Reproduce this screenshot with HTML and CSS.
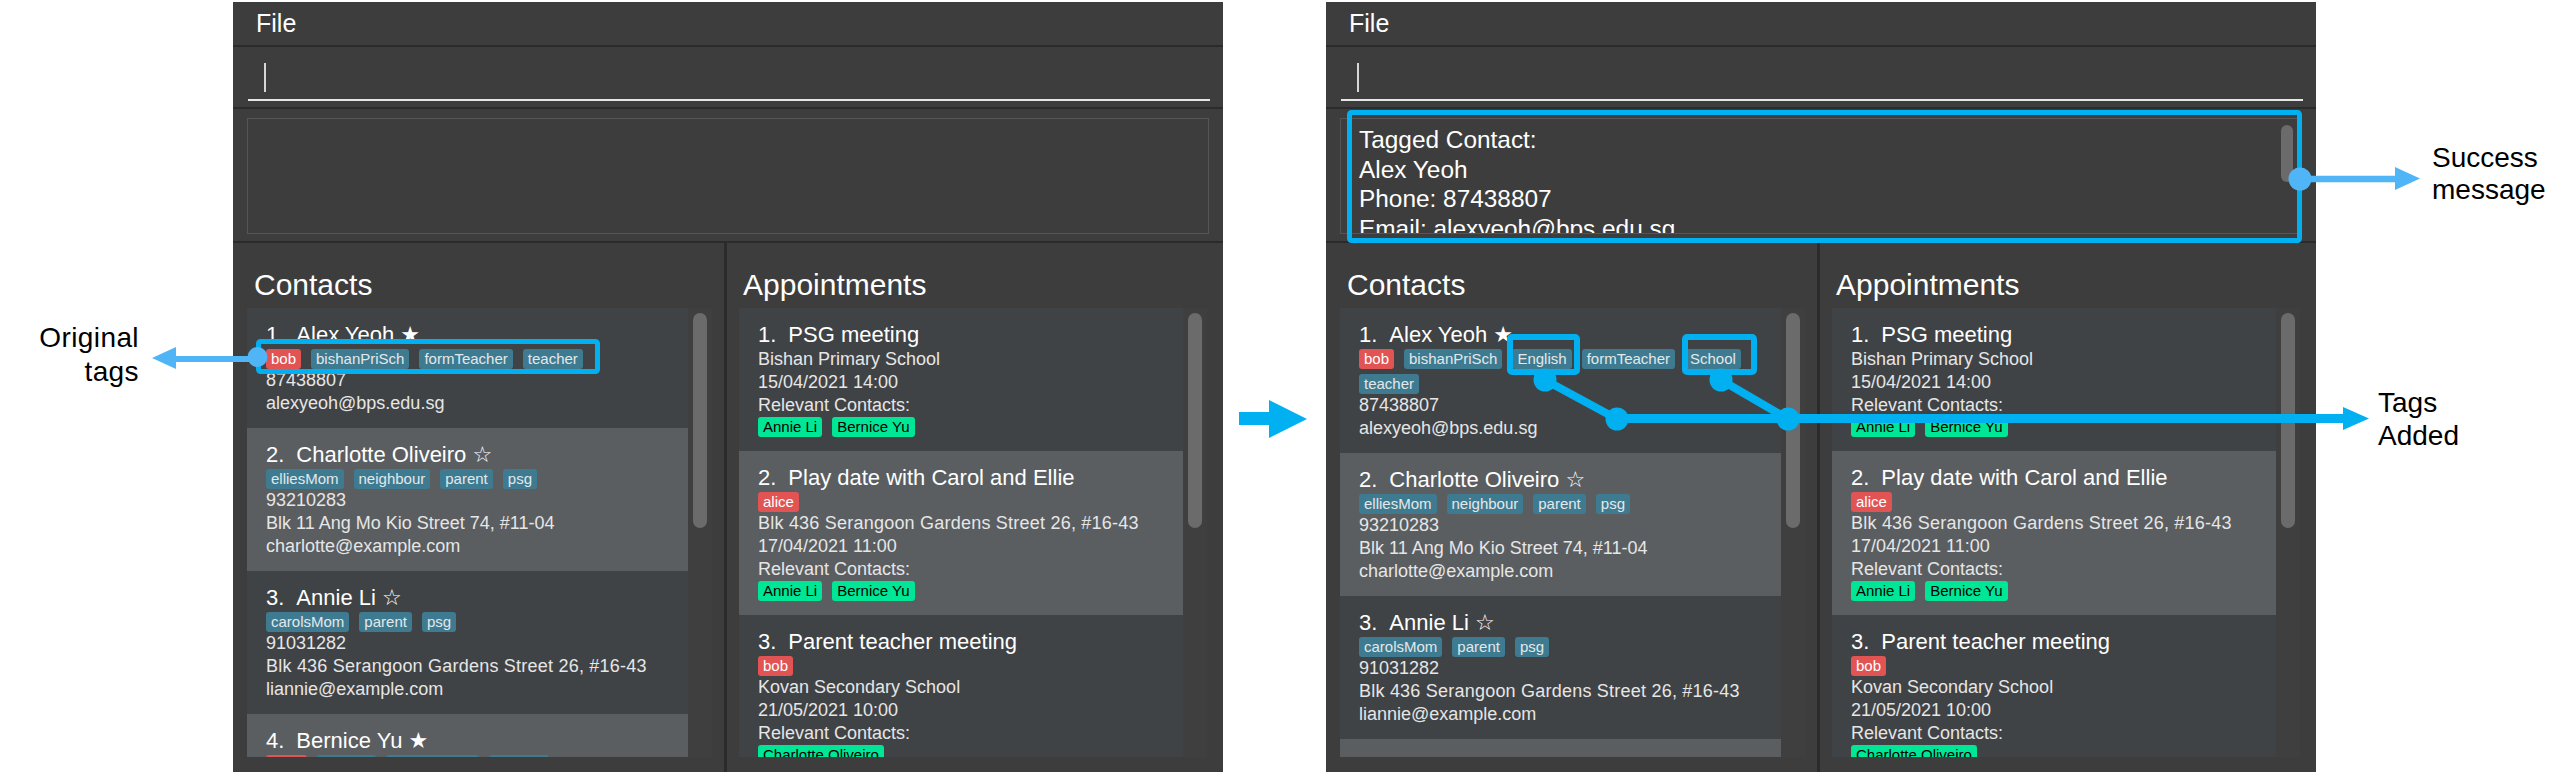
FILE: index.html
```html
<!DOCTYPE html>
<html>
<head>
<meta charset="utf-8">
<link rel="stylesheet" href="styles.css">
</head>
<body>
<div class="stage">
  <div class="window">
    <div class="menubar">File</div>
    <div class="command"><div class="input"><div class="caret"></div></div></div>
    <div class="result"><div class="rbox"><div class="rtext"></div></div></div>
    <div class="lists">
      <div class="panel panel-contacts">
        <div class="heading">Contacts</div>
        <div class="list">
          <div class="cards">
            <div class="card">
              <div class="title"><span class="idx">1.</span>Alex Yeoh <span class="star">★</span></div>
              <div class="tags"><span class="tag tag-red">bob</span><span class="tag">bishanPriSch</span><span class="tag">formTeacher</span><span class="tag">teacher</span></div>
              <div class="line">87438807</div>
              <div class="line">alexyeoh@bps.edu.sg</div>
            </div>
            <div class="card">
              <div class="title"><span class="idx">2.</span>Charlotte Oliveiro <span class="star">☆</span></div>
              <div class="tags"><span class="tag">elliesMom</span><span class="tag">neighbour</span><span class="tag">parent</span><span class="tag">psg</span></div>
              <div class="line">93210283</div>
              <div class="line">Blk 11 Ang Mo Kio Street 74, #11-04</div>
              <div class="line">charlotte@example.com</div>
            </div>
            <div class="card">
              <div class="title"><span class="idx">3.</span>Annie Li <span class="star">☆</span></div>
              <div class="tags"><span class="tag">carolsMom</span><span class="tag">parent</span><span class="tag">psg</span></div>
              <div class="line">91031282</div>
              <div class="line line-wide">Blk 436 Serangoon Gardens Street 26, #16-43</div>
              <div class="line">liannie@example.com</div>
            </div>
            <div class="card">
              <div class="title"><span class="idx">4.</span>Bernice Yu <span class="star">★</span></div>
              <div class="tags"><span class="tag tag-red">alice</span><span class="tag">English</span><span class="tag">formTeacher</span><span class="tag">teacher</span></div>
              <div class="line">92492021</div>
            </div>
          </div>
          <div class="track"><div class="thumb"></div></div>
        </div>
      </div>
      <div class="panel panel-appts">
        <div class="heading">Appointments</div>
        <div class="list">
          <div class="cards appts">
            <div class="card">
              <div class="title"><span class="idx">1.</span>PSG meeting</div>
              <div class="line">Bishan Primary School</div>
              <div class="line">15/04/2021 14:00</div>
              <div class="line">Relevant Contacts:</div>
              <div class="tags tags-flush"><span class="tag tag-green">Annie Li</span><span class="tag tag-green">Bernice Yu</span></div>
            </div>
            <div class="card">
              <div class="title"><span class="idx">2.</span>Play date with Carol and Ellie</div>
              <div class="tags"><span class="tag tag-red">alice</span></div>
              <div class="line line-wide">Blk 436 Serangoon Gardens Street 26, #16-43</div>
              <div class="line">17/04/2021 11:00</div>
              <div class="line">Relevant Contacts:</div>
              <div class="tags tags-flush"><span class="tag tag-green">Annie Li</span><span class="tag tag-green">Bernice Yu</span></div>
            </div>
            <div class="card">
              <div class="title"><span class="idx">3.</span>Parent teacher meeting</div>
              <div class="tags"><span class="tag tag-red">bob</span></div>
              <div class="line">Kovan Secondary School</div>
              <div class="line">21/05/2021 10:00</div>
              <div class="line">Relevant Contacts:</div>
              <div class="tags tags-flush"><span class="tag tag-green">Charlotte Oliveiro</span></div>
            </div>
          </div>
          <div class="track"><div class="thumb"></div></div>
        </div>
      </div>
    </div>
  </div>

  <div class="window">
    <div class="menubar">File</div>
    <div class="command"><div class="input"><div class="caret"></div></div></div>
    <div class="result"><div class="rbox">
      <div class="rtext">Tagged Contact:<br>Alex Yeoh<br>Phone: 87438807<br>Email: alexyeoh@bps.edu.sg<br>Address: 123, Jurong West Ave 6, #08-111</div>
      <div class="rthumb"></div>
    </div></div>
    <div class="lists">
      <div class="panel panel-contacts">
        <div class="heading">Contacts</div>
        <div class="list">
          <div class="cards">
            <div class="card">
              <div class="title"><span class="idx">1.</span>Alex Yeoh <span class="star">★</span></div>
              <div class="tags"><span class="tag tag-red">bob</span><span class="tag">bishanPriSch</span><span class="tag">English</span><span class="tag">formTeacher</span><span class="tag">School</span><span class="tag">teacher</span></div>
              <div class="line">87438807</div>
              <div class="line">alexyeoh@bps.edu.sg</div>
            </div>
            <div class="card">
              <div class="title"><span class="idx">2.</span>Charlotte Oliveiro <span class="star">☆</span></div>
              <div class="tags"><span class="tag">elliesMom</span><span class="tag">neighbour</span><span class="tag">parent</span><span class="tag">psg</span></div>
              <div class="line">93210283</div>
              <div class="line">Blk 11 Ang Mo Kio Street 74, #11-04</div>
              <div class="line">charlotte@example.com</div>
            </div>
            <div class="card">
              <div class="title"><span class="idx">3.</span>Annie Li <span class="star">☆</span></div>
              <div class="tags"><span class="tag">carolsMom</span><span class="tag">parent</span><span class="tag">psg</span></div>
              <div class="line">91031282</div>
              <div class="line line-wide">Blk 436 Serangoon Gardens Street 26, #16-43</div>
              <div class="line">liannie@example.com</div>
            </div>
            <div class="card">
              <div class="title"><span class="idx">4.</span>Bernice Yu <span class="star">★</span></div>
              <div class="line">92492021</div>
            </div>
          </div>
          <div class="track"><div class="thumb"></div></div>
        </div>
      </div>
      <div class="panel panel-appts">
        <div class="heading">Appointments</div>
        <div class="list">
          <div class="cards appts">
            <div class="card">
              <div class="title"><span class="idx">1.</span>PSG meeting</div>
              <div class="line">Bishan Primary School</div>
              <div class="line">15/04/2021 14:00</div>
              <div class="line">Relevant Contacts:</div>
              <div class="tags tags-flush"><span class="tag tag-green">Annie Li</span><span class="tag tag-green">Bernice Yu</span></div>
            </div>
            <div class="card">
              <div class="title"><span class="idx">2.</span>Play date with Carol and Ellie</div>
              <div class="tags"><span class="tag tag-red">alice</span></div>
              <div class="line line-wide">Blk 436 Serangoon Gardens Street 26, #16-43</div>
              <div class="line">17/04/2021 11:00</div>
              <div class="line">Relevant Contacts:</div>
              <div class="tags tags-flush"><span class="tag tag-green">Annie Li</span><span class="tag tag-green">Bernice Yu</span></div>
            </div>
            <div class="card">
              <div class="title"><span class="idx">3.</span>Parent teacher meeting</div>
              <div class="tags"><span class="tag tag-red">bob</span></div>
              <div class="line">Kovan Secondary School</div>
              <div class="line">21/05/2021 10:00</div>
              <div class="line">Relevant Contacts:</div>
              <div class="tags tags-flush"><span class="tag tag-green">Charlotte Oliveiro</span></div>
            </div>
          </div>
          <div class="track"><div class="thumb"></div></div>
        </div>
      </div>
    </div>
  </div>

  <svg class="overlay" width="2570" height="773" viewBox="0 0 2570 773">
    <rect x="258.5" y="341.5" width="339" height="30" rx="2" fill="none" stroke="#00b0f0" stroke-width="5"/>
    <line x1="170" y1="359" x2="257" y2="359" stroke="#4fb5f7" stroke-width="6"/>
    <polygon points="152,358 176,347 176,369" fill="#4fb5f7"/>
    <circle cx="257.5" cy="357" r="10" fill="#4fb5f7"/>
    <polygon points="1239,412 1269,412 1269,400 1307,419 1269,438 1269,425 1239,425" fill="#00b0f0"/>
    <rect x="1349.5" y="112.5" width="950" height="128" rx="2" fill="none" stroke="#00b0f0" stroke-width="5"/>
    <line x1="2300" y1="179" x2="2398" y2="179" stroke="#4fb5f7" stroke-width="6.5"/>
    <polygon points="2395,167 2420,178.5 2395,190" fill="#4fb5f7"/>
    <circle cx="2300" cy="179" r="11.5" fill="#4fb5f7"/>
    <rect x="1510" y="337" width="67" height="35" rx="2" fill="none" stroke="#00b0f0" stroke-width="6"/>
    <rect x="1685" y="337" width="69" height="35" rx="2" fill="none" stroke="#00b0f0" stroke-width="6"/>
    <line x1="1545" y1="380" x2="1617" y2="419" stroke="#00b0f0" stroke-width="8"/>
    <line x1="1721" y1="380" x2="1788" y2="419" stroke="#00b0f0" stroke-width="8"/>
    <line x1="1617" y1="418.5" x2="2346" y2="418.5" stroke="#00b0f0" stroke-width="9"/>
    <polygon points="2343,407 2369,418.5 2343,430" fill="#00b0f0"/>
    <circle cx="1545" cy="380" r="11.5" fill="#00b0f0"/>
    <circle cx="1617" cy="419" r="11.5" fill="#00b0f0"/>
    <circle cx="1721" cy="380" r="11.5" fill="#00b0f0"/>
    <circle cx="1788" cy="419" r="11.5" fill="#00b0f0"/>
  </svg>

  <div class="note note-original">Original<br>tags</div>
  <div class="note note-success">Success<br>message</div>
  <div class="note note-added">Tags<br>Added</div>
</div>
</body>
</html>
```

FILE: styles.css
```css
* { box-sizing: border-box; }

body {
  margin: 0;
  background: #ffffff;
  font-family: "Liberation Sans", Arial, sans-serif;
}

.stage {
  position: relative;
  width: 2570px;
  height: 773px;
  display: flex;
  gap: 103px;
  padding: 2px 0 0 233px;
  overflow: hidden;
}

.window {
  flex: none;
  width: 990px;
  height: 770px;
  background: #3d3d3d;
  color: #ffffff;
  display: flex;
  flex-direction: column;
  overflow: hidden;
}

.menubar {
  height: 45px;
  border-bottom: 2px solid #2b2b2b;
  display: flex;
  align-items: center;
  padding-left: 23px;
  font-size: 25px;
}

.command {
  height: 62px;
  border-bottom: 2px solid #2b2b2b;
  padding: 12px 13px 0 15px;
}

.input {
  height: 42px;
  border-bottom: 2px solid #e6e6e6;
  padding: 4px 0 0 16px;
}

.caret {
  width: 2px;
  height: 29px;
  background: #d6d6d6;
}

.result {
  height: 134px;
  border-bottom: 2px solid #2b2b2b;
  padding: 9px 14px 0;
}

.rbox {
  height: 116px;
  border: 1px solid #555555;
  display: flex;
  overflow: hidden;
  padding: 6px 0 0 18px;
}

.rtext {
  flex: 1;
  font-size: 24.4px;
  line-height: 29.5px;
  white-space: nowrap;
}

.rthumb {
  flex: none;
  width: 12px;
  height: 57px;
  margin-right: 8px;
  border-radius: 6px;
  background: #6b6b6b;
}

.lists {
  flex: 1;
  display: flex;
  min-height: 0;
}

.panel {
  display: flex;
  flex-direction: column;
  padding-top: 24px;
  padding-bottom: 15px;
  min-height: 0;
}

.panel-contacts {
  flex: none;
  width: 494px;
  border-right: 3px solid #2b2b2b;
  padding-left: 14px;
  padding-right: 12px;
}

.panel-appts {
  flex: 1;
  padding-left: 12px;
  padding-right: 16px;
}

.heading {
  font-size: 30px;
  line-height: 36px;
  padding-left: 7px;
  margin-bottom: 5px;
}

.panel-appts .heading {
  padding-left: 4px;
}

.list {
  flex: 1;
  display: flex;
  min-height: 0;
  overflow: hidden;
}

.cards {
  flex: 1;
  overflow: hidden;
}

.track {
  flex: none;
  width: 24px;
  background: #3f3f3f;
  padding: 5px;
}

.thumb {
  height: 215px;
  border-radius: 7px;
  background: #6b6b6b;
}

.card {
  background: #404345;
  padding: 14px 19px 13px;
}

.card:nth-child(even) {
  background: #5a5e61;
}

.appts .card {
  padding-bottom: 14px;
}

.title {
  font-size: 22px;
  line-height: 26px;
  white-space: nowrap;
  color: #ffffff;
}

.idx {
  margin-right: 12px;
}

.star {
  font-family: "DejaVu Sans", sans-serif;
}

.tags {
  display: flex;
  flex-wrap: wrap;
  gap: 5px 10px;
  margin-top: 1px;
}

.tags-flush {
  margin-top: 0;
}

.tag {
  height: 20px;
  line-height: 20px;
  padding: 0 5px;
  font-size: 15px;
  border-radius: 3px;
  background: #3e7b91;
  color: #e4e8ea;
  white-space: nowrap;
}

.tag-red {
  background: #e25353;
  color: #ffffff;
}

.tag-green {
  background: #00e697;
  color: #000000;
}

.line {
  font-size: 18px;
  line-height: 23px;
  color: #e6e6e6;
  white-space: nowrap;
}

.line-wide {
  letter-spacing: 0.22px;
}

.overlay {
  position: absolute;
  left: 0;
  top: 0;
  pointer-events: none;
}

.note {
  position: absolute;
  font-family: "Liberation Sans", Arial, sans-serif;
  font-size: 28px;
  color: #000000;
  white-space: nowrap;
}

.note-original {
  left: 0;
  top: 321px;
  width: 139px;
  text-align: right;
  line-height: 34px;
  letter-spacing: 0.4px;
}

.note-success {
  left: 2432px;
  top: 142px;
  line-height: 32px;
}

.note-added {
  left: 2378px;
  top: 386px;
  line-height: 33px;
}
```
